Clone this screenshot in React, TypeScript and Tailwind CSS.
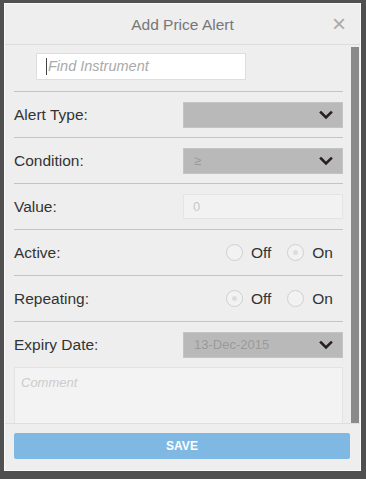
import React from "react";

const Chevron = () => (
  <svg width="14" height="10" viewBox="0 0 14 10" className="shrink-0">
    <path d="M2 2.5 L7 7.5 L12 2.5" fill="none" stroke="#2a1f1f" strokeWidth="2.6" strokeLinecap="square" />
  </svg>
);

const Radio = ({ checked, label }: { checked?: boolean; label: string }) => (
  <div className="flex items-center">
    <div className="w-[17px] h-[17px] rounded-full border border-[#cfcfcf] bg-[#f2f2f2] flex items-center justify-center">
      {checked && <div className="w-[5px] h-[5px] rounded-full bg-[#dcdcdc]" />}
    </div>
    <span className="ml-[8px] text-[15.5px] text-[#333]">{label}</span>
  </div>
);

const Select = ({ text }: { text?: string }) => (
  <div className="w-[160px] h-[26px] bg-[#b9b9b9] border border-[#c4c4c4] flex items-center justify-between pl-[10px] pr-[9px]">
    <span className="text-[13px] text-[#9a9a9a]">{text}</span>
    <Chevron />
  </div>
);

const Row = ({ label, children }: { label: string; children: React.ReactNode }) => (
  <div className="h-[46px] border-t border-[#c4c4c4] flex items-center justify-between">
    <span className="text-[15.5px] text-[#333]">{label}</span>
    {children}
  </div>
);

export default function App() {
  return (
    <div className="w-[366px] h-[479px] bg-[#505050] pt-[3px] pl-[4px]" style={{ fontFamily: '"Liberation Sans", Arial, sans-serif' }}>
      <div className="w-[357px] h-[468px] bg-[#eeeeee] border border-[#fafafa] flex flex-col overflow-hidden">
        <div className="h-[41px] border-b border-[#dcdcdc] flex items-center justify-center relative shrink-0">
          <span className="text-[15.5px] text-[#777] mt-[1px]">Add Price Alert</span>
          <span className="absolute right-[14px] top-[8px] text-[#aaa] text-[24px] leading-[24px]">×</span>
        </div>
        <div className="flex flex-1 min-h-0">
          <div className="flex-1 pl-[9px] pr-[8px] overflow-hidden">
            <div className="h-[46px] flex items-start pt-[8px]">
              <div className="ml-[22px] w-[210px] h-[27px] bg-white border border-[#dedede] flex items-center pl-[9px]">
                <div className="w-px h-[17px] bg-[#444] mr-[1px]" />
                <span className="italic text-[14.5px] text-[#aaa]">Find Instrument</span>
              </div>
            </div>
            <Row label="Alert Type:">
              <Select />
            </Row>
            <Row label="Condition:">
              <Select text="≥" />
            </Row>
            <Row label="Value:">
              <div className="w-[160px] h-[25px] bg-[#f2f2f2] border border-[#e4e4e4] flex items-center pl-[9px]">
                <span className="text-[13px] text-[#c8c8c8]">0</span>
              </div>
            </Row>
            <Row label="Active:">
              <div className="flex items-center gap-[16px] mr-[10px]">
                <Radio label="Off" />
                <Radio label="On" checked />
              </div>
            </Row>
            <Row label="Repeating:">
              <div className="flex items-center gap-[16px] mr-[10px]">
                <Radio label="Off" checked />
                <Radio label="On" />
              </div>
            </Row>
            <Row label="Expiry Date:">
              <Select text="13-Dec-2015" />
            </Row>
            <div className="h-[80px] bg-[#f3f3f3] border border-[#e3e3e3] px-[6px] pt-[2px]">
              <span className="italic text-[13px] text-[#cccccc]">Comment</span>
            </div>
          </div>
          <div className="w-[8px] mr-[1px] mt-[2px] bg-[#8a8a8a]" />
        </div>
        <div className="h-[47px] border-t border-[#dedede] shrink-0 pt-[9px] px-[9px]">
          <div className="h-[26px] w-[336px] bg-[#7fb9e3] rounded-[2px] flex items-center justify-center">
            <span className="text-white font-bold text-[12px]">SAVE</span>
          </div>
        </div>
      </div>
    </div>
  );
}
